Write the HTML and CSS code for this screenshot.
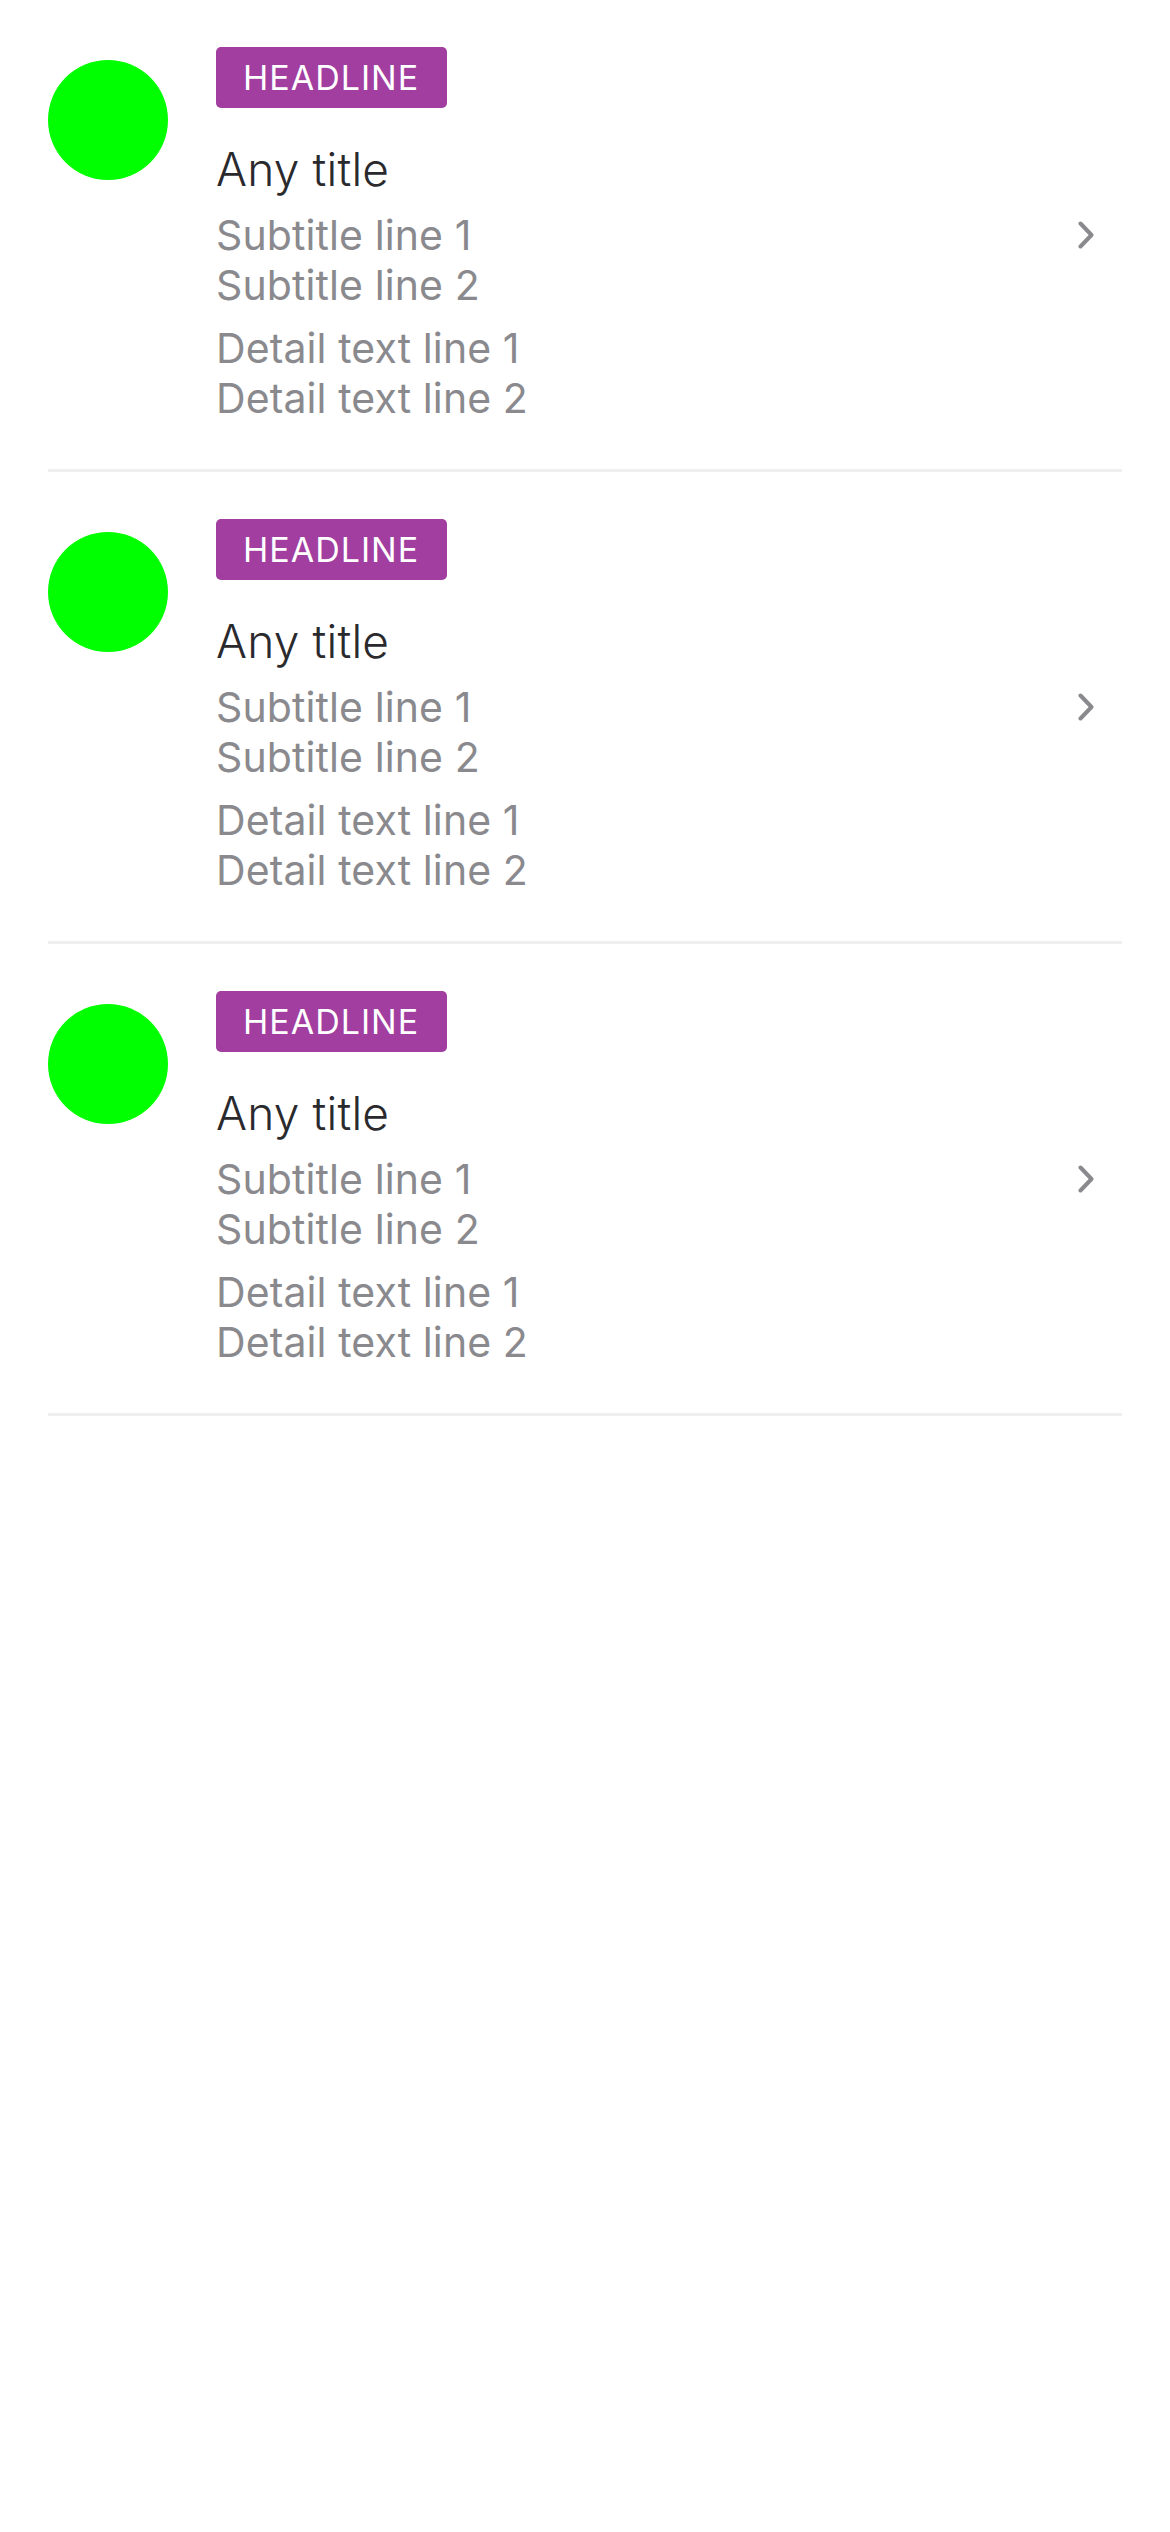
FILE: index.html
```html
<!DOCTYPE html>
<html lang="en">
<head>
<meta charset="utf-8">
<title>List</title>
<link rel="stylesheet" href="styles.css">
</head>
<body>
<ul class="list">
  <li class="item">
    <div class="avatar"></div>
    <div class="content">
      <span class="badge">HEADLINE</span>
      <div class="title">Any title</div>
      <div class="sub">Subtitle line 1<br>Subtitle line 2</div>
      <div class="detail">Detail text line 1<br>Detail text line 2</div>
    </div>
    <svg class="chevron" viewBox="0 0 16 28" width="16" height="28"><path d="M2.5 2.5 L13.5 14 L2.5 25.5" fill="none" stroke="#8a8a8e" stroke-width="4" stroke-linecap="round" stroke-linejoin="round"/></svg>
  </li>
  <li class="item">
    <div class="avatar"></div>
    <div class="content">
      <span class="badge">HEADLINE</span>
      <div class="title">Any title</div>
      <div class="sub">Subtitle line 1<br>Subtitle line 2</div>
      <div class="detail">Detail text line 1<br>Detail text line 2</div>
    </div>
    <svg class="chevron" viewBox="0 0 16 28" width="16" height="28"><path d="M2.5 2.5 L13.5 14 L2.5 25.5" fill="none" stroke="#8a8a8e" stroke-width="4" stroke-linecap="round" stroke-linejoin="round"/></svg>
  </li>
  <li class="item">
    <div class="avatar"></div>
    <div class="content">
      <span class="badge">HEADLINE</span>
      <div class="title">Any title</div>
      <div class="sub">Subtitle line 1<br>Subtitle line 2</div>
      <div class="detail">Detail text line 1<br>Detail text line 2</div>
    </div>
    <svg class="chevron" viewBox="0 0 16 28" width="16" height="28"><path d="M2.5 2.5 L13.5 14 L2.5 25.5" fill="none" stroke="#8a8a8e" stroke-width="4" stroke-linecap="round" stroke-linejoin="round"/></svg>
  </li>
</ul>
</body>
</html>
```
FILE: styles.css
```css
html, body {
  margin: 0;
  padding: 0;
  background: #ffffff;
}
body {
  font-family: Inter, "Noto Sans", sans-serif;
  width: 1170px;
  min-height: 2532px;
}
.list {
  list-style: none;
  margin: 0 48px;
  padding: 0;
}
.item {
  display: flex;
  align-items: flex-start;
  padding: 47px 28px 46px 0;
  border-bottom: 3px solid #efefef;
}
.avatar {
  flex: none;
  width: 120px;
  height: 120px;
  margin-top: 13px;
  border-radius: 50%;
  background: #00ff00;
}
.content {
  flex: 1;
  margin-left: 48px;
  display: flex;
  flex-direction: column;
  align-items: flex-start;
}
.badge {
  display: inline-flex;
  align-items: center;
  height: 61px;
  padding: 0 28px 0 27px;
  border-radius: 5px;
  background: #a13e9f;
  color: #ffffff;
  font-size: 34px;
  line-height: 1;
  letter-spacing: 1px;
}
.title {
  margin-top: 33px;
  font-size: 46px;
  line-height: 56px;
  color: #2a2a2e;
  font-weight: 300;
  letter-spacing: 0.2px;
}
.sub, .detail {
  margin-top: 13px;
  font-size: 41px;
  line-height: 50px;
  color: #8a8a8e;
  letter-spacing: 0.1px;
}
.chevron {
  flex: none;
  align-self: center;
}
```
